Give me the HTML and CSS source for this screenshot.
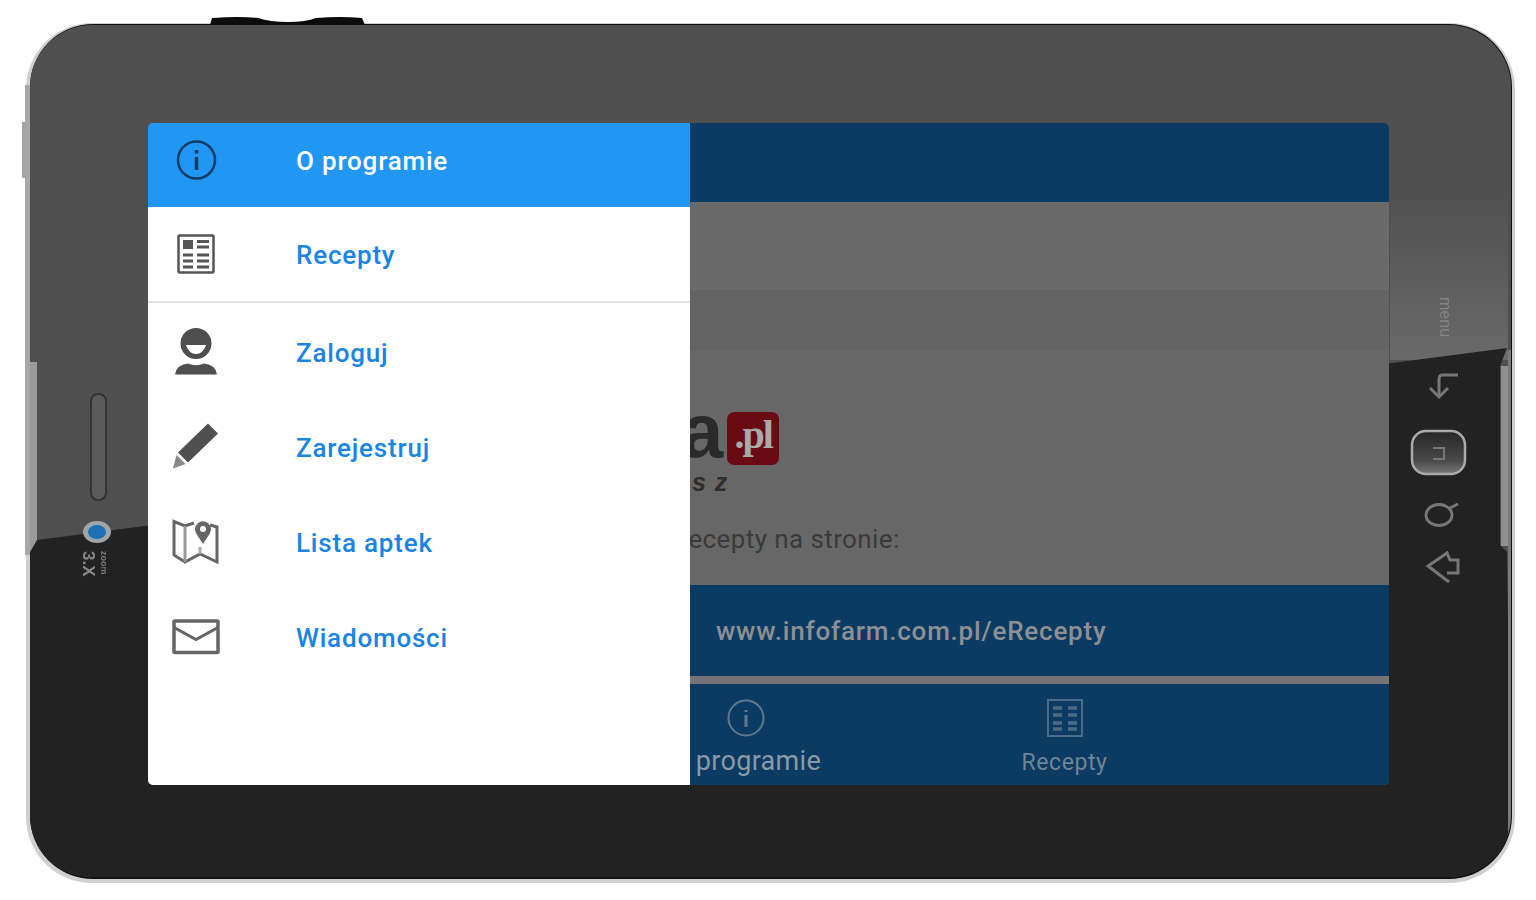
FILE: index.html
```html
<!DOCTYPE html>
<html lang="pl">
<head>
    <meta charset="UTF-8">
    <meta name="viewport" content="width=device-width, initial-scale=1.0">
    <title>eRecepta</title>
    <link rel="stylesheet" href="styles.css">
</head>
<body>
    <div class="tablet">
        <svg class="tablet-art" viewBox="0 0 1536 900" width="1536" height="900">
            <defs>
                <linearGradient id="glow" x1="0" y1="0" x2="0" y2="1">
                    <stop offset="0" stop-color="#6a6a6a" stop-opacity="0"/>
                    <stop offset="1" stop-color="#6a6a6a"/>
                </linearGradient>
                <linearGradient id="homeKey" x1="0" y1="0" x2="0" y2="1">
                    <stop offset="0" stop-color="#262626"/>
                    <stop offset="0.7" stop-color="#4a4a4a"/>
                    <stop offset="1" stop-color="#787878"/>
                </linearGradient>
                <clipPath id="shell"><rect x="30" y="25" width="1481" height="852" rx="62"/></clipPath>
            </defs>
            <!-- outer edge -->
            <rect x="26" y="23" width="1489" height="860" rx="66" fill="#d0d0d0"/>
            <rect x="25" y="85" width="5" height="470" fill="#a8a8a8"/>
            <rect x="22" y="122" width="4" height="56" fill="#a5a5a5"/>
            <rect x="30" y="24" width="1482" height="855" rx="63" fill="#111"/>
            <!-- power keys -->
            <path d="M210 25 L212 18 Q240 16 258 18 Q270 22 288 22 Q306 22 316 18 Q340 16 362 18 L365 25 Z" fill="#0c0c0c"/>
            <g clip-path="url(#shell)">
                <rect x="30" y="24" width="1482" height="854" fill="#4f4f4f"/>
                <rect x="30" y="362" width="7" height="193" fill="#9a9a9a"/>
                <rect x="1390" y="190" width="118" height="170" fill="url(#glow)"/>
                <path d="M30 552 L37 540 L1507 348 L1500 366 L1500 545 L1507 552 L1512 900 L30 900 Z" fill="#222"/>
                <rect x="1501" y="366" width="11" height="180" fill="#8f8f8f"/>
                <rect x="1508" y="350" width="4" height="530" fill="#7a7a7a"/>
            </g>
            <!-- speaker -->
            <rect x="91" y="394" width="15" height="106" rx="7" fill="#5a5a5a" stroke="#333" stroke-width="2"/>
            <!-- camera -->
            <ellipse cx="97" cy="532" rx="14" ry="11" fill="#a0a5a9"/>
            <ellipse cx="97" cy="532" rx="9" ry="7" fill="#1f6fb4"/>
            <text class="tablet-label" transform="translate(83 551) rotate(90)">3.X</text>
            <text class="tablet-small" transform="translate(101 551) rotate(90)">zoom</text>
            <!-- keys on the right -->
            <text class="tablet-menu" transform="translate(1440 297) rotate(90)">menu</text>
            <g fill="none" stroke="#777" stroke-width="3">
                <path d="M1458 375 H1442 Q1439 375 1439 380 V396"/>
                <path d="M1430 388 L1439 397 L1448 388"/>
                <ellipse cx="1439" cy="515" rx="13" ry="10.5"/>
                <path d="M1450 508 L1458 504"/>
                <path d="M1449 582 L1428 566 L1447 553 L1450 560 H1458 V573 H1447"/>
            </g>
            <rect x="1412" y="431" width="53" height="43" rx="14" fill="url(#homeKey)" stroke="#aaa" stroke-width="2.5"/>
            <path d="M1433 448 H1444 V459 H1433" fill="none" stroke="#777" stroke-width="2"/>
        </svg>

        <div class="screen">
            <div class="app-header"></div>
            <div class="band-light"></div>
            <div class="band-dark"></div>
            <div class="content">
                <div class="logo-row">
                    <span class="logo-letter">a</span>
                    <span class="logo-tile">.pl</span>
                </div>
                <div class="logo-sub">s z</div>
                <div class="content-text">Recepty na stronie:</div>
            </div>
            <div class="link-bar">www.infofarm.com.pl/eRecepty</div>
            <div class="separator"></div>
            <div class="tabbar">
                <div class="tab tab-active">
                    <svg width="40" height="40" viewBox="0 0 40 40" fill="none" stroke="#5f7a90" stroke-width="2">
                        <circle cx="20" cy="20" r="17.5"/>
                        <path d="M20 12 V14 M20 17 V29" stroke-width="3"/>
                    </svg>
                    <span>O programie</span>
                </div>
                <div class="tab">
                    <svg width="40" height="40" viewBox="0 0 40 40" fill="none" stroke="#4c6c86" stroke-width="2">
                        <rect x="3" y="2" width="34" height="36"/>
                        <path d="M8 10 H17 M23 10 H32 M8 17 H17 M23 17 H32 M8 25 H17 M23 25 H32 M8 31 H17 M23 31 H32" stroke-width="3.5"/>
                    </svg>
                    <span>Recepty</span>
                </div>
            </div>

            <nav class="drawer">
                <div class="drawer-item drawer-item-active">
                    <svg class="drawer-icon" width="48" height="48" viewBox="0 0 48 48" fill="none" stroke="#0f3b66">
                        <circle cx="24.5" cy="23" r="18.5" stroke-width="2.5"/>
                        <path d="M24.5 13 V16.5 M24.5 20 V33" stroke-width="3.5"/>
                    </svg>
                    <span>O programie</span>
                </div>
                <div class="drawer-item drawer-item-last">
                    <svg class="drawer-icon" width="48" height="48" viewBox="0 0 48 48" fill="none" stroke="#555">
                        <rect x="6.5" y="4.5" width="35" height="37" rx="1" stroke-width="2.5"/>
                        <rect x="11" y="9" width="10" height="9" fill="#555" stroke="none"/>
                        <path d="M25 10.5 H37 M25 16 H37 M11 24 H21 M25 24 H37 M11 30 H21 M25 30 H37 M11 36 H21 M25 36 H37" stroke-width="3"/>
                    </svg>
                    <span>Recepty</span>
                </div>
                <div class="drawer-group">
                    <div class="drawer-item">
                        <svg class="drawer-icon" width="48" height="48" viewBox="0 0 48 48">
                            <circle cx="24" cy="14.5" r="15.5" fill="#4f4f4f"/>
                            <path d="M14 16 H34 Q31 25 24 25 Q17 25 14 16 Z" fill="#fff"/>
                            <path d="M3 45.5 Q4 36 16 34.5 Q24 38 32 34.5 Q44 36 45 45.5 Z" fill="#4f4f4f"/>
                        </svg>
                        <span>Zaloguj</span>
                    </div>
                    <div class="drawer-item">
                        <svg class="drawer-icon" width="48" height="48" viewBox="0 0 48 48">
                            <path d="M36 -0.5 L46 9.5 L16 38.5 L6 28.5 Z" fill="#505050"/>
                            <path d="M4.5 31 L13.5 40 L1 44.5 Z" fill="#888"/>
                        </svg>
                        <span>Zarejestruj</span>
                    </div>
                    <div class="drawer-item">
                        <svg class="drawer-icon" width="48" height="48" viewBox="0 0 48 48" fill="none" stroke="#666" stroke-width="3">
                            <path d="M22 4 L13 7 L2 2.5 V36 L13 43 L28 35 L45 43 V8 L38 6"/>
                            <path d="M13 7 V43" stroke="#999"/>
                            <path d="M28 28 V35" stroke="#aaa"/>
                            <path d="M31 25 L24.5 15 A8 8 0 1 1 37.5 15 Z" fill="#666" stroke="none"/>
                            <circle cx="31" cy="10" r="3" fill="#fff" stroke="none"/>
                        </svg>
                        <span>Lista aptek</span>
                    </div>
                    <div class="drawer-item">
                        <svg class="drawer-icon" width="48" height="48" viewBox="0 0 48 48" fill="none" stroke="#666" stroke-width="3.5">
                            <rect x="2" y="7" width="44" height="31.5" rx="1"/>
                            <path d="M2 13.5 L24 25.5 L46 13.5" stroke-width="3"/>
                        </svg>
                        <span>Wiadomości</span>
                    </div>
                </div>
            </nav>
        </div>
    </div>
</body>
</html>
```

FILE: styles.css
```css
body {
    margin: 0;
    background-color: white;
    font-family: Roboto, 'Liberation Sans', sans-serif;
}
.tablet {
    position: relative;
    width: 1536px;
    height: 900px;
    box-sizing: border-box;
    padding: 123px 147px 115px 148px;
    overflow: hidden;
    filter: blur(0.6px);
}
.tablet-art {
    position: absolute;
    left: 0;
    top: 0;
}
.tablet-label {
    font-family: 'Liberation Sans', sans-serif;
    font-size: 17px;
    font-weight: bold;
    fill: #8a8a8a;
}
.tablet-small {
    font-family: 'Liberation Sans', sans-serif;
    font-size: 9px;
    font-weight: bold;
    fill: #777;
}
.tablet-menu {
    font-family: 'Liberation Sans', sans-serif;
    font-size: 16px;
    fill: #858585;
}
.screen {
    position: relative;
    display: flex;
    flex-direction: column;
    height: 662px;
    overflow: hidden;
    border-radius: 5px;
    background-color: #666;
}
.app-header {
    height: 79px;
    background-color: #0b3b62;
}
.band-light {
    height: 88px;
    background-color: #6a6a6a;
}
.band-dark {
    height: 60px;
    background-color: #636363;
}
.content {
    flex: 1;
    padding-left: 524px;
    background-color: #676767;
}
.logo-row {
    display: flex;
    gap: 4px;
    height: 54px;
    margin-top: 62px;
    padding-left: 9px;
}
.logo-letter {
    font-family: 'Liberation Sans', sans-serif;
    font-size: 76px;
    font-weight: bold;
    line-height: 38px;
    height: 46px;
    color: #2a2a2a;
}
.logo-tile {
    width: 52px;
    height: 53px;
    border-radius: 7px;
    background-color: #6a0b14;
    color: #aaa;
    font-family: 'Liberation Serif', serif;
    font-size: 40px;
    font-weight: bold;
    line-height: 46px;
    letter-spacing: -2px;
    text-align: center;
}
.logo-sub {
    margin-top: 2px;
    padding-left: 20px;
    font-family: 'Liberation Sans', sans-serif;
    font-size: 25px;
    font-style: italic;
    font-weight: bold;
    letter-spacing: 1px;
    color: #2e2e2e;
}
.content-text {
    margin-top: 27px;
    font-size: 26px;
    letter-spacing: 0.4px;
    color: #3a3a3a;
}
.link-bar {
    display: flex;
    align-items: center;
    height: 91px;
    padding-left: 568px;
    background-color: #0b3b62;
    color: #8c9094;
    font-size: 26px;
    font-weight: 500;
    letter-spacing: 0.8px;
}
.separator {
    height: 8px;
    background-color: #757575;
}
.tabbar {
    display: grid;
    grid-template-columns: 319px 319px;
    height: 101px;
    padding-left: 438px;
    background-color: #0b3b62;
}
.tab {
    display: flex;
    flex-direction: column;
    align-items: center;
    gap: 11px;
    padding-top: 14px;
    color: #6f8496;
    font-size: 23px;
    letter-spacing: 0.6px;
}
.tab-active {
    color: #8a9aa6;
    font-size: 27px;
    letter-spacing: 0.3px;
    gap: 7px;
}
.drawer {
    position: absolute;
    left: 0;
    top: 0;
    bottom: 0;
    width: 542px;
    background-color: white;
    color: #1a84e4;
    font-size: 26px;
    font-weight: 500;
    letter-spacing: 0.8px;
}
.drawer-item {
    display: flex;
    align-items: center;
    gap: 76px;
    height: 95px;
    padding-left: 24px;
}
.drawer-icon {
    flex-shrink: 0;
    overflow: visible;
}
.drawer-item-active {
    height: 84px;
    box-sizing: border-box;
    padding-bottom: 8px;
    background-color: #2196f3;
    color: white;
}
.drawer-item-last {
    height: 92px;
    padding-top: 2px;
    border-bottom: 2px solid #e2e2e2;
}
.drawer-group {
    padding-top: 2px;
}
```
